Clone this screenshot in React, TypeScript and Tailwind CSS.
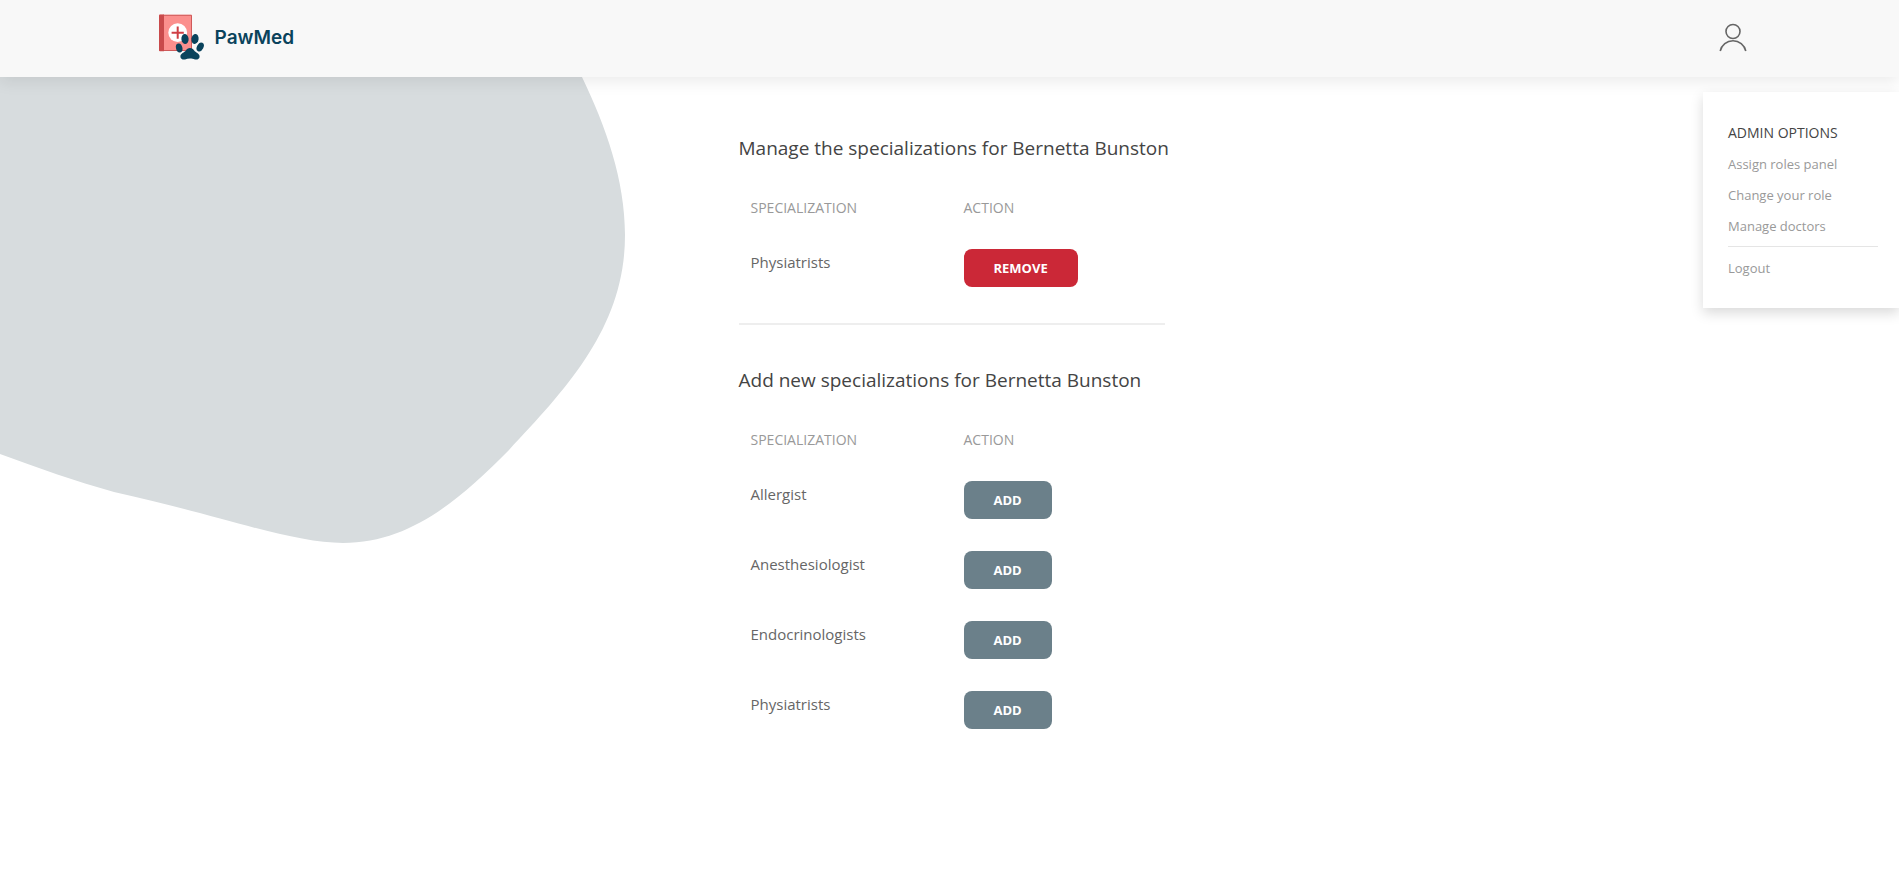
import React from "react";

type Row = { name: string };

const assigned: Row[] = [{ name: "Physiatrists" }];
const available: Row[] = [
  { name: "Allergist" },
  { name: "Anesthesiologist" },
  { name: "Endocrinologists" },
  { name: "Physiatrists" },
];

const adminLinks = ["Assign roles panel", "Change your role", "Manage doctors"];

function Logo() {
  return (
    <svg className="h-12 w-[46px]" viewBox="0 0 46 48" aria-hidden="true">
      <rect x="1" y="0.8" width="33" height="36.2" rx="1" fill="#fb8f8d" />
      <path d="M5 1.3H33.5V36.5H5" fill="none" stroke="#cf5a5a" strokeWidth="1" />
      <path d="M2 0.5H6V37.3H2Q1 37.3 1 36.3V1.5Q1 0.5 2 0.5Z" fill="#c94a4b" />
      <circle cx="19.7" cy="18.7" r="9.4" fill="#fff" />
      <path d="M19.7 12.6V24.8M13.6 18.7H25.8" stroke="#cf3f45" strokeWidth="2" />
      <g fill="#0a435c">
        <ellipse cx="27" cy="25" rx="3.6" ry="5" transform="rotate(-6 27 25)" />
        <ellipse cx="37" cy="25" rx="3.6" ry="5" transform="rotate(8 37 25)" />
        <ellipse cx="21.2" cy="34" rx="3.2" ry="4.6" transform="rotate(-14 21.2 34)" />
        <ellipse cx="42.2" cy="33" rx="3.2" ry="4.7" transform="rotate(28 42.2 33)" />
        <path d="M32 34C34 34 35.2 34.9 36.2 36.6C37.4 38.6 41.6 39.6 41.6 42.4C41.6 45 39.2 45.8 37 45.4C35.2 45 33.8 44.5 32 44.5C30.2 44.5 28.6 45 27 45.4C24.8 45.8 22.4 45 22.4 42.4C22.4 39.6 26.6 38.6 27.8 36.6C28.8 34.9 30 34 32 34Z" />
      </g>
    </svg>
  );
}

function SpecializationTable({
  title,
  rows,
  action,
}: {
  title: string;
  rows: Row[];
  action: "Remove" | "Add";
}) {
  return (
    <section>
      <h2 className="mb-[19px] text-[19px] leading-7 font-normal whitespace-nowrap text-[#444]">{title}</h2>
      <table className="w-full table-fixed text-left">
        <thead>
          <tr>
            <th className="px-3 pt-4 pb-[15px] text-[14px] leading-[21px] font-normal text-[#999] uppercase">Specialization</th>
            <th className="px-3 pt-4 pb-[15px] text-[14px] leading-[21px] font-normal text-[#999] uppercase">Action</th>
          </tr>
        </thead>
        <tbody>
          {rows.map((row) => (
            <tr key={row.name}>
              <td className="px-3 py-4 align-top text-[15px] leading-[26px] text-[#666]">{row.name}</td>
              <td className="px-3 py-4 align-top">
                <button
                  type="button"
                  className={
                    action === "Remove"
                      ? "block h-[38px] rounded-lg bg-[#cb2837] px-[30px] pt-0.5 text-[13px] font-bold text-white uppercase"
                      : "block h-[38px] rounded-lg bg-[#6b808a] px-[30px] pt-0.5 text-[13px] font-bold text-white uppercase"
                  }
                >
                  {action}
                </button>
              </td>
            </tr>
          ))}
        </tbody>
      </table>
    </section>
  );
}

export default function App() {
  return (
    <div className="relative min-h-screen overflow-hidden bg-white font-['Open_Sans','Noto_Sans',sans-serif] text-[#666]">
      <svg className="absolute top-0 left-0 h-[560px] w-[640px]" viewBox="0 0 640 560" aria-hidden="true">
        <path
          d="M0 0H545C556 25 570 52 582 77C606 127 625 180 625 235C625 325 570 385 509 450C458 502 408 543 343 543C290 543 216 514 114 492C75 481 38 468 0 454Z"
          fill="#d7dcde"
        />
      </svg>

      <header className="relative bg-[#f8f8f8] shadow-[0_5px_15px_rgba(0,0,0,0.08)]">
        <div className="flex h-[77px] items-center justify-between px-[8.3%] pb-px">
          <a
            href="#"
            className="flex items-center gap-[11px] font-['Inter',sans-serif] text-[19px] font-semibold text-[#0a435c]"
          >
            <Logo />
            PawMed
          </a>
          <button type="button" aria-label="Account" aria-expanded="true" className="-mr-2">
            <svg className="h-8 w-8" viewBox="0 0 32 32" fill="none" stroke="#666" strokeWidth="1.6" aria-hidden="true">
              <circle cx="16" cy="9.5" r="7" />
              <path d="M3.2 29A13.1 13.1 0 0 1 28.8 29" />
            </svg>
          </button>
        </div>
      </header>

      <nav
        aria-label="Account menu"
        className="absolute top-[92px] right-0 w-[196px] bg-white py-[25px] pr-[21px] pl-[25px] text-[13px] leading-[21px] text-[#999] shadow-[0_5px_12px_rgba(0,0,0,0.15)]"
      >
        <h2 className="py-[5px] text-[14px] text-[#444] uppercase">Admin options</h2>
        <ul>
          {adminLinks.map((label) => (
            <li key={label}>
              <a href="#" className="block pt-1.5 pb-1">
                {label}
              </a>
            </li>
          ))}
        </ul>
        <hr className="my-[5px] border-[#e5e5e5]" />
        <a href="#" className="block pt-1.5 pb-1">
          Logout
        </a>
      </nav>

      <main className="relative flex justify-center pt-[57px] pl-1">
        <div className="w-[426px]">
          <SpecializationTable title="Manage the specializations for Bernetta Bunston" rows={assigned} action="Remove" />
          <hr className="mt-5 mb-[41px] border-t-2 border-[#eee]" />
          <SpecializationTable title="Add new specializations for Bernetta Bunston" rows={available} action="Add" />
        </div>
      </main>
    </div>
  );
}
